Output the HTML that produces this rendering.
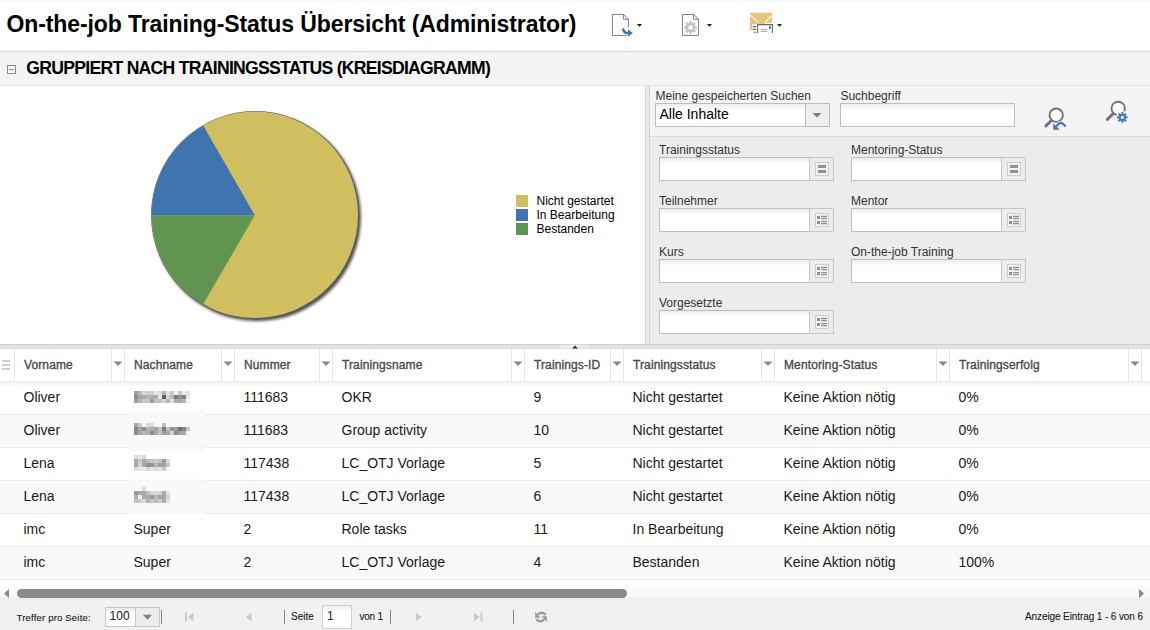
<!DOCTYPE html>
<html><head><meta charset="utf-8"><style>
*{margin:0;padding:0;box-sizing:border-box}
html,body{width:1150px;height:630px;overflow:hidden;background:#fff;font-family:"Liberation Sans",sans-serif;color:#222}
.t{position:absolute;white-space:nowrap}
.r{position:absolute}
svg{position:absolute;overflow:visible}
</style></head><body>
<div class="r" style="left:0px;top:0px;width:1150px;height:2px;background:linear-gradient(#f8f8f8,#fcfcfc)"></div>
<div class="t" style="left:6.5px;top:12.93px;font-size:23px;line-height:23px;font-weight:bold;color:#000;letter-spacing:-0.1px">On-the-job Training-Status Übersicht (Administrator)</div>
<svg style="left:0;top:0" width="1150" height="50">
 <path d="M626.9 35.4 H612.4 V14.4 H623.6 L628.4 19.2 V27.5" fill="#fff" stroke="#7d7d7d" stroke-width="1"/>
 <path d="M623.6 14.4 V19.2 H628.4" fill="none" stroke="#7d7d7d" stroke-width="1"/>
 <path d="M623.2 29.6 Q624.5 33.6 629 33.3" fill="none" stroke="#3c78be" stroke-width="2.6" stroke-linecap="round"/>
 <path d="M627.8 29.3 L632.8 33.1 L628.2 36.7 Z" fill="#3c78be"/>
 <path d="M637 24 H642 L639.5 26.8 Z" fill="#111"/>
 <path d="M682.4 35.4 V14.4 H693.6 L698.6 19.2 V35.4 Z" fill="#fff" stroke="#7d7d7d" stroke-width="1"/>
 <path d="M693.6 14.4 V19.2 H698.6" fill="none" stroke="#7d7d7d" stroke-width="1"/>
 <g transform="translate(690.5,27.5)" fill="#c2c2c2">
  <circle r="4.6"/>
  <rect x="-1.4" y="-6.3" width="2.8" height="12.6"/><rect x="-1.4" y="-6.3" width="2.8" height="12.6" transform="rotate(45)"/><rect x="-1.4" y="-6.3" width="2.8" height="12.6" transform="rotate(90)"/><rect x="-1.4" y="-6.3" width="2.8" height="12.6" transform="rotate(135)"/>
  <circle r="2.3" fill="#fff"/>
 </g>
 <path d="M707 24 H712 L709.5 26.8 Z" fill="#111"/>
 <path d="M750 12.8 H772 V23 H765 V24 H757 V30 H750 Z" fill="#eac47c"/>
 <path d="M750 15.2 L758.3 22.3 M771.8 15.5 L765 22.3" stroke="#fff" stroke-width="1.1"/>
 <rect x="752.3" y="24.2" width="22" height="10" fill="#fff"/>
 <path d="M757.6 33 V24.6 H772.4 V33" fill="#fff" stroke="#6a6a6a" stroke-width="1.1"/>
 <path d="M761 29.4 h6 M761 31.4 h6" stroke="#999" stroke-width="0.9"/>
 <rect x="769" y="26" width="1.8" height="3" fill="#3c78be"/>
 <path d="M752.8 26.6 h3.4 M752.8 29.4 h3.4 M753.8 32.3 h2.4" stroke="#666" stroke-width="1.1"/>
 <path d="M777 24 H782 L779.5 26.8 Z" fill="#111"/>
</svg>
<div class="r" style="left:0px;top:51px;width:1150px;height:35px;background:#f4f4f4;border-top:1px solid #d6d6d6;border-bottom:1px solid #e2e2e2"></div>
<div class="r" style="left:7px;top:65px;width:9px;height:9px;border:1px solid #8a8a8a;background:#fafafa"></div>
<div class="r" style="left:9px;top:69px;width:5px;height:1px;background:#8a8a8a"></div>
<div class="t" style="left:26.3px;top:60.00px;font-size:17.6px;line-height:17.6px;font-weight:bold;color:#000;letter-spacing:-0.72px">GRUPPIERT NACH TRAININGSSTATUS (KREISDIAGRAMM)</div>
<svg style="left:0;top:0" width="1150" height="630">
 <defs><filter id="sh" x="-10%" y="-10%" width="120%" height="120%"><feGaussianBlur stdDeviation="1.4"/></filter></defs>
 <circle cx="256.8" cy="217.10000000000002" r="104.0" fill="#48484e" filter="url(#sh)"/>
 <circle cx="255.10000000000002" cy="215.10000000000002" r="104.0" fill="#5a5a60"/>
 <circle cx="254.8" cy="214.8" r="103.2" fill="#cfbf5e"/>
 <path d="M254.8 215.2 L203.20 125.43 A103.2 103.2 0 0 0 151.60000000000002 215.2 Z" fill="#3e74b1"/>
 <path d="M254.8 215.2 L151.60000000000002 215.2 A103.2 103.2 0 0 0 203.20 304.17 Z" fill="#5f9550"/>
</svg>
<div class="r" style="left:516px;top:195px;width:12px;height:12px;background:#cfbf5e"></div>
<div class="t" style="left:536.5px;top:194.64px;font-size:12px;line-height:12px;color:#000">Nicht gestartet</div>
<div class="r" style="left:516px;top:209px;width:12px;height:12px;background:#3e74b1"></div>
<div class="t" style="left:536.5px;top:208.64px;font-size:12px;line-height:12px;color:#000">In Bearbeitung</div>
<div class="r" style="left:516px;top:223px;width:12px;height:12px;background:#5f9550"></div>
<div class="t" style="left:536.5px;top:222.64px;font-size:12px;line-height:12px;color:#000">Bestanden</div>
<div class="r" style="left:645px;top:86px;width:5px;height:258px;background:#e8e8e8;border-left:1px solid #d2d2d2;border-right:1px solid #d2d2d2"></div>
<div class="r" style="left:650px;top:86px;width:500px;height:51px;background:#f4f4f4;border-bottom:1px solid #dcdcdc"></div>
<div class="r" style="left:650px;top:137px;width:500px;height:207px;background:#ececec"></div>
<div class="t" style="left:655.5px;top:89.54px;font-size:12px;line-height:12px;color:#333">Meine gespeicherten Suchen</div>
<div class="t" style="left:840.4px;top:89.64px;font-size:12px;line-height:12px;color:#333">Suchbegriff</div>
<div class="r" style="left:655px;top:103px;width:175px;height:24px;border:1px solid #bdbdbd;background:linear-gradient(#e9eef0,#fff 6px,#fff)"></div>
<div class="r" style="left:805px;top:103px;width:25px;height:24px;border:1px solid #bdbdbd;background:#efefef"></div>
<svg style="left:0;top:0" width="1150" height="630"><path d="M812.5 113 H821.5 L817 117.5 Z" fill="#7a7a7a"/></svg>
<div class="t" style="left:659.5px;top:107.05px;font-size:14px;line-height:14px;color:#000">Alle Inhalte</div>
<div class="r" style="left:840px;top:103px;width:175px;height:24px;border:1px solid #bdbdbd;background:linear-gradient(#e9eef0,#fff 6px,#fff)"></div>
<svg style="left:0;top:0" width="1150" height="630">
 <path d="M1045.9 125.9 L1051.6 120.2" stroke="#747474" stroke-width="2.9" stroke-linecap="round"/>
 <circle cx="1056.2" cy="115.2" r="6.7" fill="#fff" stroke="#747474" stroke-width="1.9"/>
 <path d="M1052 121 L1068 121 L1068 132 L1052 132 Z" fill="#f4f4f4" opacity="0"/>
 <path d="M1065.5 126.8 Q1061 119.2 1056.3 126.5" fill="none" stroke="#f4f4f4" stroke-width="3.6"/>
 <path d="M1065.5 126.8 Q1061 119.2 1056.3 126.5" fill="none" stroke="#4079bd" stroke-width="2.2"/>
 <path d="M1053.2 123.2 L1053.2 129.8 L1059.9 129.8 Z" fill="#4079bd"/>
 <path d="M1107.4 119.4 L1113.4 113.4" stroke="#747474" stroke-width="2.9" stroke-linecap="round"/>
 <circle cx="1118.2" cy="108.4" r="6.7" fill="#fff" stroke="#747474" stroke-width="1.9"/>
 <circle cx="1122.3" cy="117.4" r="6.3" fill="#f4f4f4"/>
 <g transform="translate(1122.3,117.4)" fill="#4079bd">
  <circle r="3.5"/>
  <rect x="-1.05" y="-5.3" width="2.1" height="10.6"/><rect x="-1.05" y="-5.3" width="2.1" height="10.6" transform="rotate(45)"/><rect x="-1.05" y="-5.3" width="2.1" height="10.6" transform="rotate(90)"/><rect x="-1.05" y="-5.3" width="2.1" height="10.6" transform="rotate(135)"/>
  <circle r="1.6" fill="#f4f4f4"/>
 </g>
</svg>
<div class="t" style="left:659px;top:144.34px;font-size:12px;line-height:12px;color:#333">Trainingsstatus</div>
<div class="r" style="left:659px;top:157px;width:175px;height:24px;border:1px solid #bdbdbd;background:linear-gradient(#e9eef0,#fff 6px,#fff)"></div>
<div class="r" style="left:809px;top:157px;width:25px;height:24px;border:1px solid #c8c8c8;background:#ececec"></div>
<div class="r" style="left:815px;top:162px;width:14px;height:14px;border:1px solid #cdcdcd;background:#f3f3f3"></div>
<div class="r" style="left:818px;top:165px;width:8px;height:3px;background:#909090"></div>
<div class="r" style="left:818px;top:170px;width:8px;height:3px;background:#909090"></div>
<div class="t" style="left:851px;top:144.34px;font-size:12px;line-height:12px;color:#333">Mentoring-Status</div>
<div class="r" style="left:851px;top:157px;width:175px;height:24px;border:1px solid #bdbdbd;background:linear-gradient(#e9eef0,#fff 6px,#fff)"></div>
<div class="r" style="left:1001px;top:157px;width:25px;height:24px;border:1px solid #c8c8c8;background:#ececec"></div>
<div class="r" style="left:1007px;top:162px;width:14px;height:14px;border:1px solid #cdcdcd;background:#f3f3f3"></div>
<div class="r" style="left:1010px;top:165px;width:8px;height:3px;background:#909090"></div>
<div class="r" style="left:1010px;top:170px;width:8px;height:3px;background:#909090"></div>
<div class="t" style="left:659px;top:195.34px;font-size:12px;line-height:12px;color:#333">Teilnehmer</div>
<div class="r" style="left:659px;top:208px;width:175px;height:24px;border:1px solid #bdbdbd;background:linear-gradient(#e9eef0,#fff 6px,#fff)"></div>
<div class="r" style="left:809px;top:208px;width:25px;height:24px;border:1px solid #c8c8c8;background:#ececec"></div>
<div class="r" style="left:815px;top:213px;width:14px;height:14px;border:1px solid #cdcdcd;background:#f3f3f3"></div>
<div class="r" style="left:817px;top:216px;width:3px;height:3px;background:#909090"></div>
<div class="r" style="left:817px;top:221px;width:3px;height:3px;background:#909090"></div>
<svg style="left:815px;top:213px" width="14" height="14"><rect x="6" y="2.85" width="6" height="1.3" rx="0.5" fill="#8e8e8e"/><rect x="6" y="4.95" width="6" height="1.3" rx="0.5" fill="#8e8e8e"/><rect x="6" y="7.95" width="6" height="1.3" rx="0.5" fill="#8e8e8e"/><rect x="6" y="9.9" width="6" height="1.3" rx="0.5" fill="#8e8e8e"/></svg>
<div class="t" style="left:851px;top:195.34px;font-size:12px;line-height:12px;color:#333">Mentor</div>
<div class="r" style="left:851px;top:208px;width:175px;height:24px;border:1px solid #bdbdbd;background:linear-gradient(#e9eef0,#fff 6px,#fff)"></div>
<div class="r" style="left:1001px;top:208px;width:25px;height:24px;border:1px solid #c8c8c8;background:#ececec"></div>
<div class="r" style="left:1007px;top:213px;width:14px;height:14px;border:1px solid #cdcdcd;background:#f3f3f3"></div>
<div class="r" style="left:1009px;top:216px;width:3px;height:3px;background:#909090"></div>
<div class="r" style="left:1009px;top:221px;width:3px;height:3px;background:#909090"></div>
<svg style="left:1007px;top:213px" width="14" height="14"><rect x="6" y="2.85" width="6" height="1.3" rx="0.5" fill="#8e8e8e"/><rect x="6" y="4.95" width="6" height="1.3" rx="0.5" fill="#8e8e8e"/><rect x="6" y="7.95" width="6" height="1.3" rx="0.5" fill="#8e8e8e"/><rect x="6" y="9.9" width="6" height="1.3" rx="0.5" fill="#8e8e8e"/></svg>
<div class="t" style="left:659px;top:246.34px;font-size:12px;line-height:12px;color:#333">Kurs</div>
<div class="r" style="left:659px;top:259px;width:175px;height:24px;border:1px solid #bdbdbd;background:linear-gradient(#e9eef0,#fff 6px,#fff)"></div>
<div class="r" style="left:809px;top:259px;width:25px;height:24px;border:1px solid #c8c8c8;background:#ececec"></div>
<div class="r" style="left:815px;top:264px;width:14px;height:14px;border:1px solid #cdcdcd;background:#f3f3f3"></div>
<div class="r" style="left:817px;top:267px;width:3px;height:3px;background:#909090"></div>
<div class="r" style="left:817px;top:272px;width:3px;height:3px;background:#909090"></div>
<svg style="left:815px;top:264px" width="14" height="14"><rect x="6" y="2.85" width="6" height="1.3" rx="0.5" fill="#8e8e8e"/><rect x="6" y="4.95" width="6" height="1.3" rx="0.5" fill="#8e8e8e"/><rect x="6" y="7.95" width="6" height="1.3" rx="0.5" fill="#8e8e8e"/><rect x="6" y="9.9" width="6" height="1.3" rx="0.5" fill="#8e8e8e"/></svg>
<div class="t" style="left:851px;top:246.34px;font-size:12px;line-height:12px;color:#333">On-the-job Training</div>
<div class="r" style="left:851px;top:259px;width:175px;height:24px;border:1px solid #bdbdbd;background:linear-gradient(#e9eef0,#fff 6px,#fff)"></div>
<div class="r" style="left:1001px;top:259px;width:25px;height:24px;border:1px solid #c8c8c8;background:#ececec"></div>
<div class="r" style="left:1007px;top:264px;width:14px;height:14px;border:1px solid #cdcdcd;background:#f3f3f3"></div>
<div class="r" style="left:1009px;top:267px;width:3px;height:3px;background:#909090"></div>
<div class="r" style="left:1009px;top:272px;width:3px;height:3px;background:#909090"></div>
<svg style="left:1007px;top:264px" width="14" height="14"><rect x="6" y="2.85" width="6" height="1.3" rx="0.5" fill="#8e8e8e"/><rect x="6" y="4.95" width="6" height="1.3" rx="0.5" fill="#8e8e8e"/><rect x="6" y="7.95" width="6" height="1.3" rx="0.5" fill="#8e8e8e"/><rect x="6" y="9.9" width="6" height="1.3" rx="0.5" fill="#8e8e8e"/></svg>
<div class="t" style="left:659px;top:297.34px;font-size:12px;line-height:12px;color:#333">Vorgesetzte</div>
<div class="r" style="left:659px;top:310px;width:175px;height:24px;border:1px solid #bdbdbd;background:linear-gradient(#e9eef0,#fff 6px,#fff)"></div>
<div class="r" style="left:809px;top:310px;width:25px;height:24px;border:1px solid #c8c8c8;background:#ececec"></div>
<div class="r" style="left:815px;top:315px;width:14px;height:14px;border:1px solid #cdcdcd;background:#f3f3f3"></div>
<div class="r" style="left:817px;top:318px;width:3px;height:3px;background:#909090"></div>
<div class="r" style="left:817px;top:323px;width:3px;height:3px;background:#909090"></div>
<svg style="left:815px;top:315px" width="14" height="14"><rect x="6" y="2.85" width="6" height="1.3" rx="0.5" fill="#8e8e8e"/><rect x="6" y="4.95" width="6" height="1.3" rx="0.5" fill="#8e8e8e"/><rect x="6" y="7.95" width="6" height="1.3" rx="0.5" fill="#8e8e8e"/><rect x="6" y="9.9" width="6" height="1.3" rx="0.5" fill="#8e8e8e"/></svg>
<div class="r" style="left:0px;top:344px;width:1150px;height:5px;background:#e4e4e4;border-top:1px solid #cfcfcf;border-bottom:1px solid #d9d9d9"></div>
<svg style="left:0;top:0" width="1150" height="630"><path d="M557 349 L561 344.5 H588 L592 349 Z" fill="#ececec" stroke="#d0d0d0" stroke-width="0.8"/><path d="M572 348.5 L575 345.5 L578 348.5 Z" fill="#333"/></svg>
<div class="r" style="left:0px;top:349px;width:1150px;height:32px;background:#fff"></div>
<div class="r" style="left:2px;top:360px;width:8px;height:2px;background:#cfcfcf"></div>
<div class="r" style="left:2px;top:364px;width:8px;height:2px;background:#cfcfcf"></div>
<div class="r" style="left:2px;top:368px;width:8px;height:2px;background:#cfcfcf"></div>
<div class="r" style="left:14px;top:349px;width:1px;height:32px;background:#e4e4e4"></div>
<div class="t" style="left:24px;top:358.74px;font-size:12px;line-height:12px;color:#4a4a4a;-webkit-text-stroke:0.35px #4a4a4a;letter-spacing:0.12px">Vorname</div>
<div class="r" style="left:111px;top:349px;width:1px;height:32px;background:#e4e4e4"></div>
<div class="r" style="left:124px;top:349px;width:1px;height:32px;background:#e4e4e4"></div>
<div class="t" style="left:134px;top:358.74px;font-size:12px;line-height:12px;color:#4a4a4a;-webkit-text-stroke:0.35px #4a4a4a;letter-spacing:0.12px">Nachname</div>
<div class="r" style="left:221px;top:349px;width:1px;height:32px;background:#e4e4e4"></div>
<div class="r" style="left:234px;top:349px;width:1px;height:32px;background:#e4e4e4"></div>
<div class="t" style="left:244px;top:358.74px;font-size:12px;line-height:12px;color:#4a4a4a;-webkit-text-stroke:0.35px #4a4a4a;letter-spacing:0.12px">Nummer</div>
<div class="r" style="left:319px;top:349px;width:1px;height:32px;background:#e4e4e4"></div>
<div class="r" style="left:332px;top:349px;width:1px;height:32px;background:#e4e4e4"></div>
<div class="t" style="left:342px;top:358.74px;font-size:12px;line-height:12px;color:#4a4a4a;-webkit-text-stroke:0.35px #4a4a4a;letter-spacing:0.12px">Trainingsname</div>
<div class="r" style="left:511px;top:349px;width:1px;height:32px;background:#e4e4e4"></div>
<div class="r" style="left:524px;top:349px;width:1px;height:32px;background:#e4e4e4"></div>
<div class="t" style="left:534px;top:358.74px;font-size:12px;line-height:12px;color:#4a4a4a;-webkit-text-stroke:0.35px #4a4a4a;letter-spacing:0.12px">Trainings-ID</div>
<div class="r" style="left:610px;top:349px;width:1px;height:32px;background:#e4e4e4"></div>
<div class="r" style="left:623px;top:349px;width:1px;height:32px;background:#e4e4e4"></div>
<div class="t" style="left:633px;top:358.74px;font-size:12px;line-height:12px;color:#4a4a4a;-webkit-text-stroke:0.35px #4a4a4a;letter-spacing:0.12px">Trainingsstatus</div>
<div class="r" style="left:761px;top:349px;width:1px;height:32px;background:#e4e4e4"></div>
<div class="r" style="left:774px;top:349px;width:1px;height:32px;background:#e4e4e4"></div>
<div class="t" style="left:784px;top:358.74px;font-size:12px;line-height:12px;color:#4a4a4a;-webkit-text-stroke:0.35px #4a4a4a;letter-spacing:0.12px">Mentoring-Status</div>
<div class="r" style="left:936px;top:349px;width:1px;height:32px;background:#e4e4e4"></div>
<div class="r" style="left:949px;top:349px;width:1px;height:32px;background:#e4e4e4"></div>
<div class="t" style="left:959px;top:358.74px;font-size:12px;line-height:12px;color:#4a4a4a;-webkit-text-stroke:0.35px #4a4a4a;letter-spacing:0.12px">Trainingserfolg</div>
<div class="r" style="left:1128px;top:349px;width:1px;height:32px;background:#e4e4e4"></div>
<div class="r" style="left:1141px;top:349px;width:1px;height:32px;background:#e4e4e4"></div>
<svg style="left:0;top:0" width="1150" height="630"><path d="M113.5 361.5 H122.5 L118 366 Z" fill="#8a8a8a"/><path d="M223.5 361.5 H232.5 L228 366 Z" fill="#8a8a8a"/><path d="M321.5 361.5 H330.5 L326 366 Z" fill="#8a8a8a"/><path d="M513.5 361.5 H522.5 L518 366 Z" fill="#8a8a8a"/><path d="M612.5 361.5 H621.5 L617 366 Z" fill="#8a8a8a"/><path d="M763.5 361.5 H772.5 L768 366 Z" fill="#8a8a8a"/><path d="M938.5 361.5 H947.5 L943 366 Z" fill="#8a8a8a"/><path d="M1130.5 361.5 H1139.5 L1135 366 Z" fill="#8a8a8a"/></svg>
<div class="r" style="left:0px;top:382px;width:1150px;height:33px;background:#fff;border-bottom:1px solid #ececec"></div>
<div class="r" style="left:0px;top:415px;width:1150px;height:33px;background:#f9f9f9;border-bottom:1px solid #ececec"></div>
<div class="r" style="left:0px;top:448px;width:1150px;height:33px;background:#fff;border-bottom:1px solid #ececec"></div>
<div class="r" style="left:0px;top:481px;width:1150px;height:33px;background:#f9f9f9;border-bottom:1px solid #ececec"></div>
<div class="r" style="left:0px;top:514px;width:1150px;height:33px;background:#fff;border-bottom:1px solid #ececec"></div>
<div class="r" style="left:0px;top:547px;width:1150px;height:33px;background:#f9f9f9;border-bottom:1px solid #ececec"></div>
<div class="t" style="left:23.5px;top:389.95px;font-size:14px;line-height:14px;color:#1a1a1a">Oliver</div>
<div class="t" style="left:243.5px;top:389.95px;font-size:14px;line-height:14px;color:#1a1a1a">111683</div>
<div class="t" style="left:341.5px;top:389.95px;font-size:14px;line-height:14px;color:#1a1a1a">OKR</div>
<div class="t" style="left:533.5px;top:389.95px;font-size:14px;line-height:14px;color:#1a1a1a">9</div>
<div class="t" style="left:632.5px;top:389.95px;font-size:14px;line-height:14px;color:#1a1a1a">Nicht gestartet</div>
<div class="t" style="left:783.5px;top:389.95px;font-size:14px;line-height:14px;color:#1a1a1a">Keine Aktion nötig</div>
<div class="t" style="left:958.5px;top:389.95px;font-size:14px;line-height:14px;color:#1a1a1a">0%</div>
<div class="t" style="left:23.5px;top:422.95px;font-size:14px;line-height:14px;color:#1a1a1a">Oliver</div>
<div class="t" style="left:243.5px;top:422.95px;font-size:14px;line-height:14px;color:#1a1a1a">111683</div>
<div class="t" style="left:341.5px;top:422.95px;font-size:14px;line-height:14px;color:#1a1a1a">Group activity</div>
<div class="t" style="left:533.5px;top:422.95px;font-size:14px;line-height:14px;color:#1a1a1a">10</div>
<div class="t" style="left:632.5px;top:422.95px;font-size:14px;line-height:14px;color:#1a1a1a">Nicht gestartet</div>
<div class="t" style="left:783.5px;top:422.95px;font-size:14px;line-height:14px;color:#1a1a1a">Keine Aktion nötig</div>
<div class="t" style="left:958.5px;top:422.95px;font-size:14px;line-height:14px;color:#1a1a1a">0%</div>
<div class="t" style="left:23.5px;top:455.95px;font-size:14px;line-height:14px;color:#1a1a1a">Lena</div>
<div class="t" style="left:243.5px;top:455.95px;font-size:14px;line-height:14px;color:#1a1a1a">117438</div>
<div class="t" style="left:341.5px;top:455.95px;font-size:14px;line-height:14px;color:#1a1a1a">LC_OTJ Vorlage</div>
<div class="t" style="left:533.5px;top:455.95px;font-size:14px;line-height:14px;color:#1a1a1a">5</div>
<div class="t" style="left:632.5px;top:455.95px;font-size:14px;line-height:14px;color:#1a1a1a">Nicht gestartet</div>
<div class="t" style="left:783.5px;top:455.95px;font-size:14px;line-height:14px;color:#1a1a1a">Keine Aktion nötig</div>
<div class="t" style="left:958.5px;top:455.95px;font-size:14px;line-height:14px;color:#1a1a1a">0%</div>
<div class="t" style="left:23.5px;top:488.95px;font-size:14px;line-height:14px;color:#1a1a1a">Lena</div>
<div class="t" style="left:243.5px;top:488.95px;font-size:14px;line-height:14px;color:#1a1a1a">117438</div>
<div class="t" style="left:341.5px;top:488.95px;font-size:14px;line-height:14px;color:#1a1a1a">LC_OTJ Vorlage</div>
<div class="t" style="left:533.5px;top:488.95px;font-size:14px;line-height:14px;color:#1a1a1a">6</div>
<div class="t" style="left:632.5px;top:488.95px;font-size:14px;line-height:14px;color:#1a1a1a">Nicht gestartet</div>
<div class="t" style="left:783.5px;top:488.95px;font-size:14px;line-height:14px;color:#1a1a1a">Keine Aktion nötig</div>
<div class="t" style="left:958.5px;top:488.95px;font-size:14px;line-height:14px;color:#1a1a1a">0%</div>
<div class="t" style="left:23.5px;top:521.95px;font-size:14px;line-height:14px;color:#1a1a1a">imc</div>
<div class="t" style="left:133.5px;top:521.95px;font-size:14px;line-height:14px;color:#1a1a1a">Super</div>
<div class="t" style="left:243.5px;top:521.95px;font-size:14px;line-height:14px;color:#1a1a1a">2</div>
<div class="t" style="left:341.5px;top:521.95px;font-size:14px;line-height:14px;color:#1a1a1a">Role tasks</div>
<div class="t" style="left:533.5px;top:521.95px;font-size:14px;line-height:14px;color:#1a1a1a">11</div>
<div class="t" style="left:632.5px;top:521.95px;font-size:14px;line-height:14px;color:#1a1a1a">In Bearbeitung</div>
<div class="t" style="left:783.5px;top:521.95px;font-size:14px;line-height:14px;color:#1a1a1a">Keine Aktion nötig</div>
<div class="t" style="left:958.5px;top:521.95px;font-size:14px;line-height:14px;color:#1a1a1a">0%</div>
<div class="t" style="left:23.5px;top:554.95px;font-size:14px;line-height:14px;color:#1a1a1a">imc</div>
<div class="t" style="left:133.5px;top:554.95px;font-size:14px;line-height:14px;color:#1a1a1a">Super</div>
<div class="t" style="left:243.5px;top:554.95px;font-size:14px;line-height:14px;color:#1a1a1a">2</div>
<div class="t" style="left:341.5px;top:554.95px;font-size:14px;line-height:14px;color:#1a1a1a">LC_OTJ Vorlage</div>
<div class="t" style="left:533.5px;top:554.95px;font-size:14px;line-height:14px;color:#1a1a1a">4</div>
<div class="t" style="left:632.5px;top:554.95px;font-size:14px;line-height:14px;color:#1a1a1a">Bestanden</div>
<div class="t" style="left:783.5px;top:554.95px;font-size:14px;line-height:14px;color:#1a1a1a">Keine Aktion nötig</div>
<div class="t" style="left:958.5px;top:554.95px;font-size:14px;line-height:14px;color:#1a1a1a">100%</div>
<div class="r" style="left:128px;top:411px;width:76px;height:40px;background:#f9f9f9"></div>
<div class="r" style="left:128px;top:479px;width:76px;height:35px;background:#f9f9f9"></div>
<svg style="left:134px;top:391px" width="56" height="12" shape-rendering="crispEdges"><rect x="0" y="0" width="4" height="4" fill="#a39ea3"/><rect x="4" y="0" width="4" height="4" fill="#b3b8c2"/><rect x="8" y="0" width="4" height="4" fill="#ddd8d2"/><rect x="12" y="0" width="4" height="4" fill="#c7ced3"/><rect x="16" y="0" width="4" height="4" fill="#d1d1d3"/><rect x="20" y="0" width="4" height="4" fill="#ede8e3"/><rect x="24" y="0" width="4" height="4" fill="#d9dee6"/><rect x="28" y="0" width="4" height="4" fill="#b5b7b4"/><rect x="32" y="0" width="4" height="4" fill="#e5e1dd"/><rect x="36" y="0" width="4" height="4" fill="#c9c9cc"/><rect x="40" y="0" width="4" height="4" fill="#f3f6fc"/><rect x="44" y="0" width="4" height="4" fill="#cdc6c4"/><rect x="48" y="0" width="4" height="4" fill="#ede9ec"/><rect x="52" y="0" width="4" height="4" fill="#dfe2e2"/><rect x="0" y="4" width="4" height="4" fill="#8f8a93"/><rect x="4" y="4" width="4" height="4" fill="#a3a7b0"/><rect x="8" y="4" width="4" height="4" fill="#acabae"/><rect x="12" y="4" width="4" height="4" fill="#b5b6b5"/><rect x="16" y="4" width="4" height="4" fill="#afafb0"/><rect x="20" y="4" width="4" height="4" fill="#aeacaf"/><rect x="24" y="4" width="4" height="4" fill="#e6e6e8"/><rect x="28" y="4" width="4" height="4" fill="#6e5d52"/><rect x="32" y="4" width="4" height="4" fill="#ddd4c4"/><rect x="36" y="4" width="4" height="4" fill="#adc0c5"/><rect x="40" y="4" width="4" height="4" fill="#8a7478"/><rect x="44" y="4" width="4" height="4" fill="#8c969c"/><rect x="48" y="4" width="4" height="4" fill="#8b7b8d"/><rect x="52" y="4" width="4" height="4" fill="#dbecf2"/><rect x="0" y="8" width="4" height="4" fill="#a19c9f"/><rect x="4" y="8" width="4" height="4" fill="#b3b8c2"/><rect x="8" y="8" width="4" height="4" fill="#cbcace"/><rect x="12" y="8" width="4" height="4" fill="#cdc5bf"/><rect x="16" y="8" width="4" height="4" fill="#9aa0a9"/><rect x="20" y="8" width="4" height="4" fill="#cdc5bf"/><rect x="24" y="8" width="4" height="4" fill="#bec3cb"/><rect x="28" y="8" width="4" height="4" fill="#d3d2c6"/><rect x="32" y="8" width="4" height="4" fill="#c4b4aa"/><rect x="36" y="8" width="4" height="4" fill="#d4e6ec"/><rect x="40" y="8" width="4" height="4" fill="#b8a8ae"/><rect x="44" y="8" width="4" height="4" fill="#a6a7ac"/><rect x="48" y="8" width="4" height="4" fill="#bcb0bd"/><rect x="52" y="8" width="4" height="4" fill="#ecfafc"/></svg>
<svg style="left:134px;top:423px" width="56" height="12" shape-rendering="crispEdges"><rect x="0" y="0" width="4" height="4" fill="#aba3a3"/><rect x="4" y="0" width="4" height="4" fill="#c5cad6"/><rect x="12" y="0" width="4" height="4" fill="#dcdcdc"/><rect x="16" y="0" width="4" height="4" fill="#dcdcdc"/><rect x="28" y="0" width="4" height="4" fill="#c2c1bf"/><rect x="0" y="4" width="4" height="4" fill="#8a838a"/><rect x="4" y="4" width="4" height="4" fill="#a2a7ac"/><rect x="8" y="4" width="4" height="4" fill="#948c86"/><rect x="12" y="4" width="4" height="4" fill="#aeb6b8"/><rect x="16" y="4" width="4" height="4" fill="#aaaaab"/><rect x="20" y="4" width="4" height="4" fill="#aba39c"/><rect x="24" y="4" width="4" height="4" fill="#bcc0c8"/><rect x="28" y="4" width="4" height="4" fill="#847a6e"/><rect x="32" y="4" width="4" height="4" fill="#cdbfa8"/><rect x="36" y="4" width="4" height="4" fill="#88989c"/><rect x="40" y="4" width="4" height="4" fill="#a8969c"/><rect x="44" y="4" width="4" height="4" fill="#6e6e6e"/><rect x="48" y="4" width="4" height="4" fill="#887e8e"/><rect x="52" y="4" width="4" height="4" fill="#b6cad2"/><rect x="0" y="8" width="4" height="4" fill="#8f8a93"/><rect x="4" y="8" width="4" height="4" fill="#a2a7b0"/><rect x="8" y="8" width="4" height="4" fill="#b7b5ba"/><rect x="12" y="8" width="4" height="4" fill="#b6b0a6"/><rect x="16" y="8" width="4" height="4" fill="#858c94"/><rect x="20" y="8" width="4" height="4" fill="#ada7a0"/><rect x="24" y="8" width="4" height="4" fill="#bec3ca"/><rect x="28" y="8" width="4" height="4" fill="#aa9c8c"/><rect x="32" y="8" width="4" height="4" fill="#b4a494"/><rect x="36" y="8" width="4" height="4" fill="#c2dde2"/><rect x="40" y="8" width="4" height="4" fill="#9e848a"/><rect x="44" y="8" width="4" height="4" fill="#9aa6ae"/><rect x="48" y="8" width="4" height="4" fill="#b9a2b0"/><rect x="52" y="8" width="4" height="4" fill="#e4fafa"/></svg>
<svg style="left:134px;top:455px" width="36" height="16" shape-rendering="crispEdges"><rect x="0" y="0" width="4" height="4" fill="#e2dcd6"/><rect x="4" y="0" width="4" height="4" fill="#dde3ea"/><rect x="8" y="0" width="4" height="4" fill="#d7d7d7"/><rect x="0" y="4" width="4" height="4" fill="#a2a6b8"/><rect x="4" y="4" width="4" height="4" fill="#c8c8c8"/><rect x="8" y="4" width="4" height="4" fill="#a8a8a8"/><rect x="12" y="4" width="4" height="4" fill="#c2b8ae"/><rect x="16" y="4" width="4" height="4" fill="#c0c6ce"/><rect x="20" y="4" width="4" height="4" fill="#cacaca"/><rect x="24" y="4" width="4" height="4" fill="#c8c2b2"/><rect x="28" y="4" width="4" height="4" fill="#a09a98"/><rect x="32" y="4" width="4" height="4" fill="#d8dee8"/><rect x="0" y="8" width="4" height="4" fill="#a2a6b8"/><rect x="4" y="8" width="4" height="4" fill="#d2d2d2"/><rect x="8" y="8" width="4" height="4" fill="#a8a8a8"/><rect x="12" y="8" width="4" height="4" fill="#9a8e84"/><rect x="16" y="8" width="4" height="4" fill="#8e96a0"/><rect x="20" y="8" width="4" height="4" fill="#b4b6b2"/><rect x="24" y="8" width="4" height="4" fill="#a69e90"/><rect x="28" y="8" width="4" height="4" fill="#a8a29e"/><rect x="32" y="8" width="4" height="4" fill="#c2c8d8"/><rect x="0" y="12" width="4" height="4" fill="#e2dcd6"/><rect x="4" y="12" width="4" height="4" fill="#e0e6ec"/><rect x="8" y="12" width="4" height="4" fill="#ececec"/><rect x="12" y="12" width="4" height="4" fill="#ddd8d4"/><rect x="16" y="12" width="4" height="4" fill="#e2e6ea"/><rect x="20" y="12" width="4" height="4" fill="#e0dcd6"/><rect x="24" y="12" width="4" height="4" fill="#e2e6ec"/><rect x="28" y="12" width="4" height="4" fill="#d4ccc8"/><rect x="32" y="12" width="4" height="4" fill="#f2f6fa"/></svg>
<svg style="left:134px;top:487px" width="36" height="16" shape-rendering="crispEdges"><rect x="8" y="0" width="4" height="4" fill="#dcdcdc"/><rect x="0" y="4" width="4" height="4" fill="#9e9898"/><rect x="4" y="4" width="4" height="4" fill="#a6aab4"/><rect x="8" y="4" width="4" height="4" fill="#aaaaaa"/><rect x="12" y="4" width="4" height="4" fill="#c6beb6"/><rect x="16" y="4" width="4" height="4" fill="#d4dae0"/><rect x="20" y="4" width="4" height="4" fill="#d8d8d8"/><rect x="24" y="4" width="4" height="4" fill="#d8d6d0"/><rect x="28" y="4" width="4" height="4" fill="#b0a8a4"/><rect x="32" y="4" width="4" height="4" fill="#dde4ee"/><rect x="0" y="8" width="4" height="4" fill="#a4acc6"/><rect x="4" y="8" width="4" height="4" fill="#eeeeee"/><rect x="8" y="8" width="4" height="4" fill="#aaaaaa"/><rect x="12" y="8" width="4" height="4" fill="#b0a8a2"/><rect x="16" y="8" width="4" height="4" fill="#929aa2"/><rect x="20" y="8" width="4" height="4" fill="#b8bcb8"/><rect x="24" y="8" width="4" height="4" fill="#a8a696"/><rect x="28" y="8" width="4" height="4" fill="#aaa6a2"/><rect x="32" y="8" width="4" height="4" fill="#d2d2e0"/><rect x="0" y="12" width="4" height="4" fill="#c4beb8"/><rect x="4" y="12" width="4" height="4" fill="#c4ccd6"/><rect x="8" y="12" width="4" height="4" fill="#d8d8d8"/><rect x="12" y="12" width="4" height="4" fill="#b8b0aa"/><rect x="16" y="12" width="4" height="4" fill="#c2cad2"/><rect x="20" y="12" width="4" height="4" fill="#c4bab4"/><rect x="24" y="12" width="4" height="4" fill="#c8c8c8"/><rect x="28" y="12" width="4" height="4" fill="#b4aeaa"/><rect x="32" y="12" width="4" height="4" fill="#dae2ea"/></svg>
<div class="r" style="left:0px;top:381px;width:1150px;height:6px;background:linear-gradient(rgba(0,0,0,0.075),rgba(0,0,0,0))"></div>
<div class="r" style="left:0px;top:580px;width:1150px;height:20px;background:linear-gradient(#fff 0,#fff 6px,#fbfbfb 6px,#fafafa 15px,#ebebeb 20px)"></div>
<div class="r" style="left:17px;top:589px;width:610px;height:9px;background:#8a8a8a;border-radius:4.5px"></div>
<svg style="left:0;top:0" width="1150" height="630"><path d="M9 589 V598 L4 593.5 Z" fill="#888"/><path d="M1139 589 V598 L1144 593.5 Z" fill="#888"/></svg>
<div class="r" style="left:0px;top:600px;width:1150px;height:30px;background:#f1f1f1"></div>
<div class="t" style="left:16.6px;top:612.67px;font-size:9.6px;line-height:9.6px;color:#1a1a1a;-webkit-text-stroke:0.1px #1a1a1a;letter-spacing:0.15px">Treffer pro Seite:</div>
<div class="r" style="left:105px;top:607px;width:55px;height:20px;border:1px solid #c6c6c6;background:linear-gradient(#e6ecef,#fff 7px,#fff)"></div>
<div class="r" style="left:135px;top:607px;width:25px;height:20px;border:1px solid #c6c6c6;background:#ececec"></div>
<div class="t" style="left:109.6px;top:609.64px;font-size:12px;line-height:12px;color:#222">100</div>
<div class="r" style="left:161px;top:610px;width:1px;height:14px;background:#888"></div>
<div class="r" style="left:284px;top:610px;width:1px;height:14px;background:#888"></div>
<div class="r" style="left:390px;top:610px;width:1px;height:14px;background:#888"></div>
<div class="r" style="left:513px;top:610px;width:1px;height:14px;background:#888"></div>
<div class="t" style="left:291px;top:612.33px;font-size:10px;line-height:10px;color:#1a1a1a;-webkit-text-stroke:0.1px #1a1a1a">Seite</div>
<div class="r" style="left:322px;top:605px;width:30px;height:24px;border:1px solid #cfcfcf;background:linear-gradient(#e9eef0,#fff 6px,#fff)"></div>
<div class="t" style="left:327px;top:610.34px;font-size:12px;line-height:12px;color:#222">1</div>
<div class="t" style="left:359.4px;top:612.33px;font-size:10px;line-height:10px;color:#1a1a1a;-webkit-text-stroke:0.1px #1a1a1a;letter-spacing:-0.2px">von 1</div>
<svg style="left:0;top:0" width="1150" height="630">
 <path d="M142.9 614.8 H152 L147.45 619.8 Z" fill="#808080"/>
 <rect x="185" y="612.5" width="2" height="9" fill="#c9c9c9"/><path d="M193.5 612.5 V621.5 L188 617 Z" fill="#c9c9c9"/>
 <path d="M251.5 612.5 V621.5 L246 617 Z" fill="#c9c9c9"/>
 <path d="M416 612.5 V621.5 L421.5 617 Z" fill="#c9c9c9"/>
 <path d="M474 612.5 V621.5 L479.5 617 Z" fill="#c9c9c9"/><rect x="480.5" y="612.5" width="2" height="9" fill="#c9c9c9"/>
 <g fill="none" stroke="#999" stroke-width="2.6">
  <path d="M545.4 614.9 A4.4 4.4 0 0 0 538.2 614.4"/>
  <path d="M536.5 619 A4.4 4.4 0 0 0 543.9 619.5"/>
 </g>
 <path d="M535.1 611.8 V617.7 H540.6 Z" fill="#999"/>
 <path d="M541.3 616.2 H546.9 V621.7 Z" fill="#999"/>
</svg>
<div class="t" style="left:1025px;top:611.83px;font-size:10px;line-height:10px;color:#1a1a1a;-webkit-text-stroke:0.1px #1a1a1a;letter-spacing:-0.1px">Anzeige Eintrag 1 - 6 von 6</div>
</body></html>
